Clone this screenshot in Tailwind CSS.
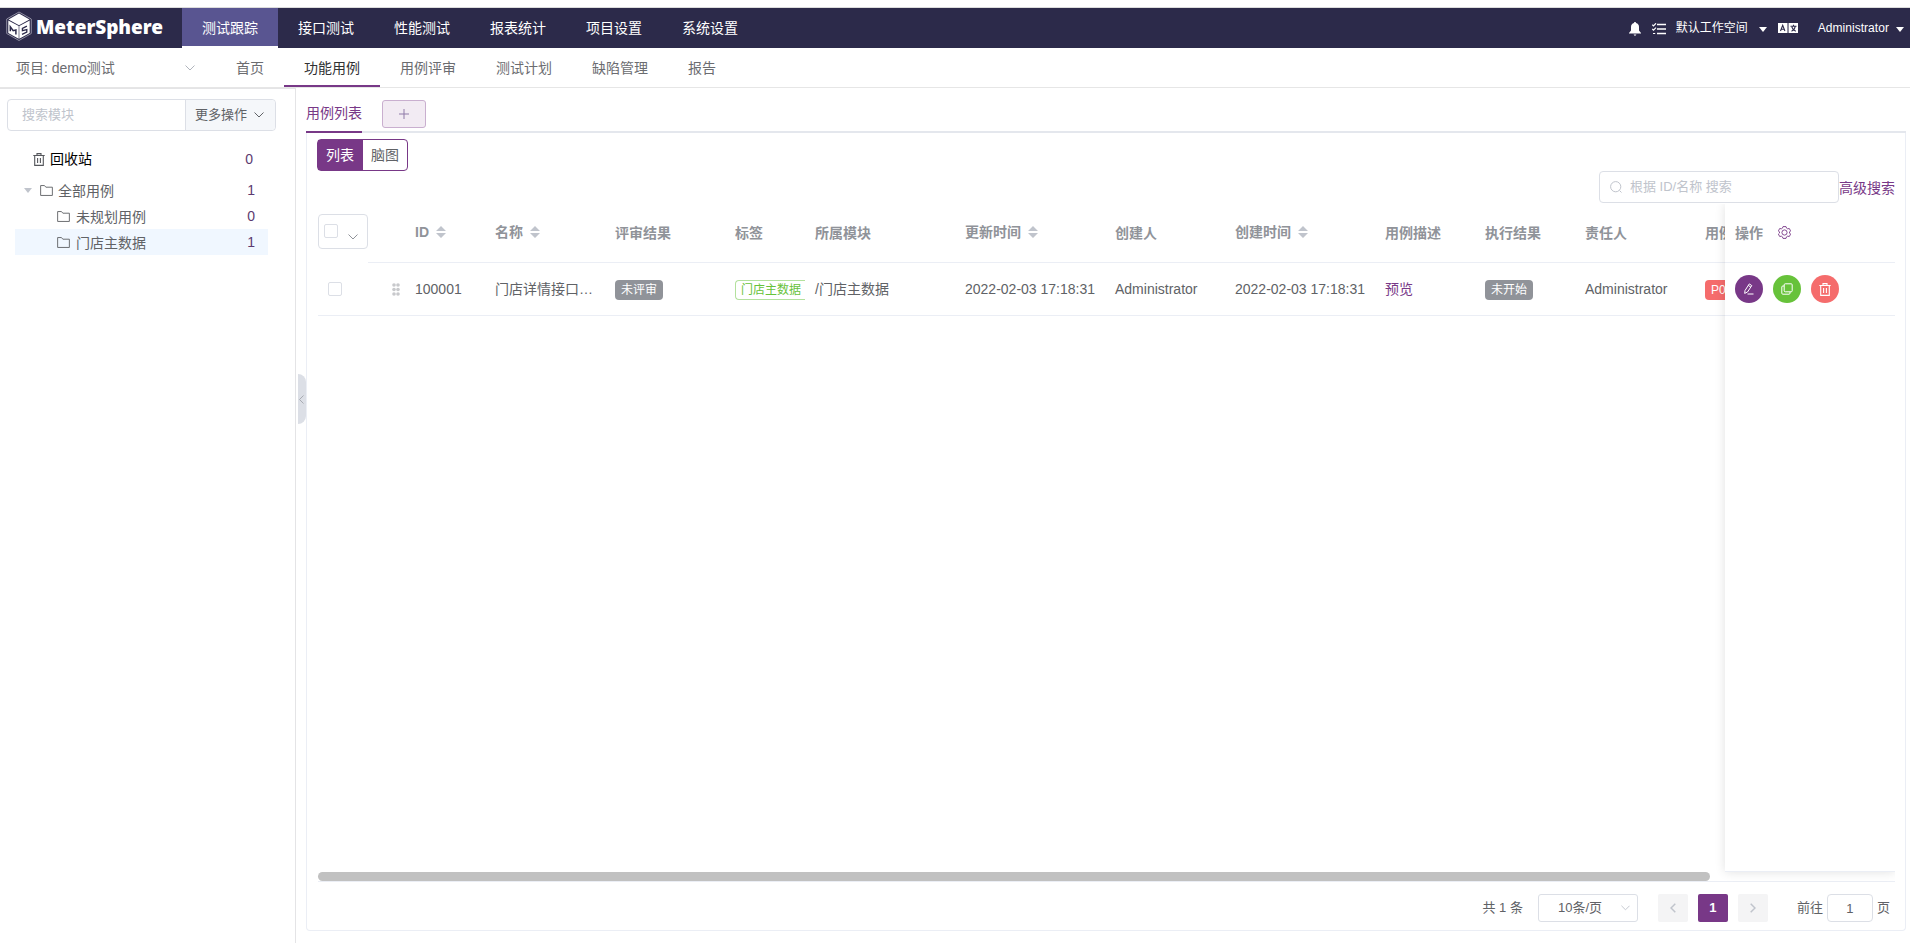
<!DOCTYPE html>
<html lang="zh-CN">
<head>
  <meta charset="UTF-8" />
  <meta name="viewport" content="width=device-width, initial-scale=1" />
  <title>MeterSphere</title>
  <script src="https://cdn.jsdelivr.net/npm/@tailwindcss/browser@4"></script>
  <style>
    body{font-family:"Liberation Sans","Noto Sans CJK SC",Arial,sans-serif}
  </style>
</head>
<body class="w-[1910px] h-[943px] overflow-hidden flex flex-col bg-white text-sm leading-5 text-[#606266]">

<!-- icons used more than once -->
<svg class="hidden">
  <symbol id="folder" viewBox="0 0 14 12"><path d="M.6 11.4V.6h4.2l1.5 1.8h7.1v9z" fill="none" stroke="currentColor" stroke-width="1"/></symbol>
  <symbol id="trash" viewBox="0 0 12 13"><path d="M.3 2.5h11.4M4 2.3V.6h4v1.7M1.7 2.7v9.7h8.6V2.7M4.6 5v5M7.4 5v5" fill="none" stroke="currentColor" stroke-width="1.1"/></symbol>
  <symbol id="down" viewBox="0 0 10 6"><path d="M.5.5 5 5 9.500.5" fill="none" stroke="currentColor" stroke-width="1"/></symbol>
  <symbol id="sort" viewBox="0 0 10 12"><path d="M5 0l5 5H0zM5 12l5-5H0z" fill="currentColor"/></symbol>
  <symbol id="caret" viewBox="0 0 8 5"><path d="M0 0h8L4 5z" fill="currentColor"/></symbol>
</svg>

<!-- TOP BAR -->
<header class="mt-[7px] h-[41px] shrink-0 border-t border-[#dcdcdc] bg-[#2c2a4a] text-white flex">
  <div class="w-[182px] flex items-start pl-1.5 pt-[3px]">
    <svg class="w-[26px] h-[31px] shrink-0" viewBox="0 0 26 31">
      <path d="M13 1 25.300 8v14.500L13 29.500.7 22.500V8z" fill="none" stroke="#9a99ab" stroke-width=".9"/>
      <path d="M13 2.600 23.500 8.500 13 14.300 2.500 8.500z" fill="#fff"/>
      <path d="M2.300 9.400 12.700 15.100v12.600L2.300 21.900z" fill="#fff"/>
      <path d="M23.700 9.400 13.300 15.100v12.600L23.700 21.900z" fill="#fff"/>
      <path d="M4.300 20.300v-4.600l2.900 4 2.700-.7v4.600" fill="none" stroke="#2c2a4a" stroke-width="1.500"/>
      <path d="M20.900 15.200l-4.500 2.100v2.400l4.400-1.200v2.500l-4.800 2.300" fill="none" stroke="#2c2a4a" stroke-width="1.300"/>
    </svg>
    <span class="ml-[4px] mt-[2px] font-['Noto_Sans'] font-black text-[19px] leading-[28px] tracking-[-0.05px]">MeterSphere</span>
  </div>
  <nav class="flex leading-[40px]">
    <a class="w-24 text-center bg-[#595591] h-[38px] border-b-2 border-white box-content">测试跟踪</a>
    <a class="w-24 text-center">接口测试</a>
    <a class="w-24 text-center">性能测试</a>
    <a class="w-24 text-center">报表统计</a>
    <a class="w-24 text-center">项目设置</a>
    <a class="w-24 text-center">系统设置</a>
  </nav>
  <div class="ml-auto flex items-center text-xs pr-[6px]">
    <svg class="w-3 h-[14px] mt-[2px]" viewBox="0 0 12 14"><path d="M6 0c.6 0 1 .4 1 1 2 .5 3 2 3 4v3.500L12 11v.6H0V11l2-2.500V5c0-2 1-3.500 3-4 0-.6.4-1 1-1zM4.500 12.400h3L6 14z" fill="#fff"/></svg>
    <svg class="ml-[11px] w-[14px] h-3 mt-[2px]" viewBox="0 0 14 12"><path d="M5 1.500h9M5 6h9M5 10.500h9" stroke="#fff" stroke-width="1.500"/><path d="M.3 1.600l1.200 1.200L4 .3M.3 6l1.200 1.200L4 4.700M1 10.500h2.200" fill="none" stroke="#fff" stroke-width="1.200"/></svg>
    <span class="ml-[10px]">默认工作空间</span>
    <svg class="ml-[11px] w-2 h-[5px] mt-[2px]"><use href="#caret"/></svg>
    <svg class="ml-[11px] w-5 h-[10px]" viewBox="0 0 20 10"><path d="M0 0h9.500v10H0zM11 0h9v10h-9z" fill="#fff"/><path d="M9.500 0H11v10H9.500z" fill="#8b8a9c"/><path d="M2.500 8 4.700 2.300 6.900 8M3.300 6.300h2.800M12.500 3.300h6M15.500 1.800v1.500M13.500 8.200c2-.8 3.300-2.400 3.700-4.700M13.800 4c.6 1.900 1.800 3.400 4 4.200" fill="none" stroke="#2c2a4a" stroke-width="1.100"/></svg>
    <span class="ml-5 tracking-[0.05px]">Administrator</span>
    <svg class="ml-[7px] w-2 h-[5px] mt-[2px]"><use href="#caret"/></svg>
  </div>
</header>

<!-- SUB MENU -->
<div class="h-10 shrink-0 border-b border-[#e6e6e6] flex leading-[41px] text-[#6b6c70]">
  <div class="w-[216px] pl-4 pr-[21px] flex items-center justify-between">
    <span class="pt-[1px]">项目: demo测试</span>
    <svg class="w-[10px] h-[6px] text-[#b0b4bc]"><use href="#down"/></svg>
  </div>
  <nav class="flex h-[39px]">
    <a class="px-5">首页</a>
    <a class="px-5 text-[#303133] border-b-2 border-[#783887]">功能用例</a>
    <a class="px-5">用例评审</a>
    <a class="px-5">测试计划</a>
    <a class="px-5">缺陷管理</a>
    <a class="px-5">报告</a>
  </nav>
</div>

<div class="flex-1 min-h-0 flex">
  <!-- MODULE TREE -->
  <aside class="w-[296px] shrink-0 border-r border-t border-[#e4e4e6]">
    <div class="mt-[10px] ml-[7px] w-[269px] h-8 border border-[#dcdfe6] rounded flex text-[13px] leading-[30px]">
      <div class="w-[177px] pl-[14px] text-[#c0c4cc]">搜索模块</div>
      <div class="flex-1 border-l border-[#dcdfe6] bg-[#f5f7fa] rounded-r pl-[9px] flex items-center">
        <span>更多操作</span>
        <svg class="ml-[7px] w-[10px] h-[6px]"><use href="#down"/></svg>
      </div>
    </div>
    <div class="mt-[15px] h-[26px] pl-[33px] pr-[42px] flex items-center text-black">
      <svg class="w-3 h-[13px] text-[#55575c]"><use href="#trash"/></svg>
      <span class="ml-[5px]">回收站</span>
      <span class="ml-auto text-[#5c3a70]">0</span>
    </div>
    <div class="mt-[5px] h-[26px] pl-6 pr-[40px] flex items-center">
      <svg class="w-2 h-[5px] text-[#c0c4cc]"><use href="#caret"/></svg>
      <svg class="ml-2 w-[13px] h-[11px]"><use href="#folder"/></svg>
      <span class="ml-[5px] pt-[1px]">全部用例</span>
      <span class="ml-auto text-[#5c3a70]">1</span>
    </div>
    <div class="mx-[15px] w-[253px] h-[26px] pl-[42px] pr-[13px] flex items-center">
      <svg class="w-[13px] h-[11px]"><use href="#folder"/></svg>
      <span class="ml-[6px] pt-[1px]">未规划用例</span>
      <span class="ml-auto text-[#5c3a70]">0</span>
    </div>
    <div class="mx-[15px] w-[253px] h-[26px] pl-[42px] pr-[13px] flex items-center bg-[#f0f7ff]">
      <svg class="w-[13px] h-[11px]"><use href="#folder"/></svg>
      <span class="ml-[6px] pt-[1px]">门店主数据</span>
      <span class="ml-auto text-[#5c3a70]">1</span>
    </div>
  </aside>

  <!-- collapse handle -->
  <div class="w-[10px] shrink-0 pt-[286px] pl-[2px]">
    <div class="w-2 h-[50px] bg-[#dcdfe6] rounded-r-lg flex items-center">
      <svg class="w-[7px] h-[9px]" viewBox="0 0 7 9"><path d="M5.500.5 1.500 4.500l4 4" fill="none" stroke="#a8abb2"/></svg>
    </div>
  </div>

  <main class="w-[1600px] pt-[12px] flex flex-col">
    <!-- tabs -->
    <div class="h-[33px] shrink-0 border-b-2 border-[#e4e7ed] flex">
      <div class="h-[33px] leading-[27px] text-[#783887] border-b-2 border-[#783887]">用例列表</div>
      <div class="ml-5 w-11 h-7 border border-[#c9afcf] bg-[#f2ebf3] rounded-[3px] flex items-center justify-center">
        <svg class="w-[10px] h-[10px]" viewBox="0 0 10 10"><path d="M0 5h10M5 0v10" stroke="#8f7aa8" stroke-width="1"/></svg>
      </div>
    </div>

    <div class="h-[798px] border border-t-0 border-[#ebeef5] rounded-b pl-[11px] pr-[10px] flex flex-col">
      <div class="mt-[6px] ml-[-1px] w-[91px] h-8 shrink-0 border border-[#783887] rounded flex leading-[30px]">
        <div class="w-[45px] pr-[1px] text-center bg-[#783887] text-white">列表</div>
        <div class="w-11 text-center">脑图</div>
      </div>
      <div class="h-[33px] shrink-0 flex justify-end">
        <div class="w-60 h-8 border border-[#dcdfe6] rounded flex items-center text-[13px] text-[#c0c4cc] pl-[10px]">
          <svg class="w-3 h-3" viewBox="0 0 12 12"><circle cx="5.700" cy="5.700" r="5.100" fill="none" stroke="currentColor"/><path d="M9.500 9.500l2 2" stroke="currentColor"/></svg>
          <span class="ml-[8px]">根据 ID/名称 搜索</span>
        </div>
        <span class="mt-[7px] text-[#783887]">高级搜索</span>
      </div>

      <!-- case table, last column is fixed -->
      <div class="h-[678px] shrink-0 w-[1577px] border-b border-[#ebeef5] flex flex-col">
        <div class="h-[668px] shrink-0 flex">
          <div class="w-[1407px] overflow-hidden">
            <div class="w-[1477px] h-[59px] grid grid-cols-[50px_17px_20px_80px_120px_120px_80px_150px_150px_120px_150px_100px_100px_120px_100px] text-[#909399] font-bold *:flex *:items-center *:border-b *:border-[#ebeef5] *:px-[10px] *:pb-[1px]">
              <div class="border-b-0! p-0! pb-[3px]!">
                <div class="mt-[-1px] w-[50px] h-[35px] border border-[#dcdfe6] rounded flex pl-[5px] pt-[9px]">
                  <span class="w-[14px] h-[14px] border border-[#dcdfe6] rounded-[2px]"></span>
                  <svg class="ml-[10px] mt-[10px] w-[10px] h-[6px] text-[#909399]"><use href="#down"/></svg>
                </div>
              </div>
              <div></div>
              <div></div>
              <div class="pb-[3px]!">ID<svg class="ml-[7px] w-[10px] h-3 text-[#c0c4cc]"><use href="#sort"/></svg></div>
              <div class="pb-[3px]!">名称<svg class="ml-[7px] w-[10px] h-3 text-[#c0c4cc]"><use href="#sort"/></svg></div>
              <div>评审结果</div>
              <div>标签</div>
              <div>所属模块</div>
              <div class="pb-[3px]!">更新时间<svg class="ml-[7px] w-[10px] h-3 text-[#c0c4cc]"><use href="#sort"/></svg></div>
              <div>创建人</div>
              <div class="pb-[3px]!">创建时间<svg class="ml-[7px] w-[10px] h-3 text-[#c0c4cc]"><use href="#sort"/></svg></div>
              <div>用例描述</div>
              <div>执行结果</div>
              <div>责任人</div>
              <div>用例等级</div>
            </div>
            <div class="w-[1477px] h-[53px] border-b border-[#ebeef5] grid grid-cols-[50px_17px_20px_80px_120px_120px_80px_150px_150px_120px_150px_100px_100px_120px_100px] whitespace-nowrap *:flex *:items-center *:px-[10px]">
              <div><span class="w-[14px] h-[14px] border border-[#dcdfe6] rounded-[2px]"></span></div>
              <div></div>
              <div class="px-[7px]!"><svg class="w-2 h-[13px] shrink-0" viewBox="0 0 8 13" fill="#c8c9cc"><circle cx="2" cy="2" r="1.800"/><circle cx="6" cy="2" r="1.800"/><circle cx="2" cy="6.500" r="1.800"/><circle cx="6" cy="6.500" r="1.800"/><circle cx="2" cy="11" r="1.800"/><circle cx="6" cy="11" r="1.800"/></svg></div>
              <div>100001</div>
              <div>门店详情接口…</div>
              <div><span class="mt-[1px] h-5 px-[6px] rounded bg-[#909399] text-white text-xs leading-5">未评审</span></div>
              <div class="pr-0!"><span class="mt-[1px] w-[70px] h-5 overflow-hidden pl-[5px] rounded-l border border-r-0 border-[#b3e19d] text-[#67c23a] text-xs leading-[18px]">门店主数据</span></div>
              <div>/门店主数据</div>
              <div>2022-02-03 17:18:31</div>
              <div>Administrator</div>
              <div>2022-02-03 17:18:31</div>
              <div class="text-[#783887]">预览</div>
              <div><span class="mt-[1px] h-5 px-[6px] rounded bg-[#909399] text-white text-xs leading-5">未开始</span></div>
              <div>Administrator</div>
              <div><span class="mt-[1px] h-5 px-[6px] rounded bg-[#f56c6c] text-white text-xs leading-5">P0</span></div>
            </div>
          </div>
          <div class="w-[170px] bg-white border-b border-[#ebeef5] shadow-[0_0_10px_rgba(0,0,0,0.12)] [clip-path:inset(0_0_-10px_-12px)]">
            <div class="h-[59px] border-b border-[#ebeef5] pl-[10px] pb-[1px] flex items-center text-[#909399] font-bold">
              操作
              <svg class="ml-[15px] w-[13px] h-[13px]" viewBox="0 0 13 13" fill="none" stroke="#783887" stroke-width=".9"><path d="M5 .6h3l.6 1.600 1 .6 1.700-.3 1.300 2.400L11.500 6v1l1.100 1.100-1.300 2.400-1.700-.3-1 .6-.6 1.600H5l-.6-1.600-1-.6-1.700.3L.4 8.100 1.500 7V6L.4 4.900l1.300-2.400 1.700.3 1-.6z"/><circle cx="6.500" cy="6.500" r="2.600"/></svg>
            </div>
            <div class="h-[53px] border-b border-[#ebeef5] pl-[10px] flex items-center gap-[10px] text-white *:w-7 *:h-7 *:rounded-full *:flex *:items-center *:justify-center">
              <div class="bg-[#783887]"><svg class="w-3 h-3" viewBox="0 0 12 12" fill="none" stroke="currentColor"><path d="M2 7.500 6.300.9l2.500 1.700L4.500 9 1.700 10.400zM5.300 2.400l2.500 1.700M4.500 11h6"/></svg></div>
              <div class="bg-[#67c23a]"><svg class="w-3 h-3" viewBox="0 0 12 12" fill="none" stroke="currentColor"><rect x="3.200" y=".8" width="8" height="8" rx="1"/><path d="M3.200 3H1.800a1 1 0 0 0-1 1v6.200a1 1 0 0 0 1 1H8a1 1 0 0 0 1-1V8.800"/></svg></div>
              <div class="bg-[#f56c6c]"><svg class="w-3 h-[13px]"><use href="#trash"/></svg></div>
            </div>
          </div>
        </div>
        <div class="w-[1392px] h-[9px] bg-[#c1c1c1] rounded-full"></div>
      </div>

      <!-- pagination -->
      <div class="mt-3 mr-[5px] h-7 flex justify-end items-center text-[13px]">
        <span>共 1 条</span>
        <div class="ml-[15px] w-[100px] h-7 border border-[#dcdfe6] rounded-[3px] flex items-center pl-[19px] pr-[7px]">
          <span>10条/页</span>
          <svg class="ml-auto w-[9px] h-[6px] text-[#c0c4cc]"><use href="#down"/></svg>
        </div>
        <div class="ml-5 w-[30px] h-7 bg-[#f4f4f5] rounded-[2px] flex items-center justify-center"><svg class="w-[6px] h-[10px]" viewBox="0 0 6 10"><path d="M5.300.7 1 5l4.300 4.300" fill="none" stroke="#c0c4cc" stroke-width="1.500"/></svg></div>
        <div class="ml-[10px] w-[30px] h-7 bg-[#783887] rounded-[2px] text-white font-bold text-center leading-7">1</div>
        <div class="ml-[10px] w-[30px] h-7 bg-[#f4f4f5] rounded-[2px] flex items-center justify-center"><svg class="w-[6px] h-[10px]" viewBox="0 0 6 10"><path d="M.7.700 5 5 .7 9.300" fill="none" stroke="#c0c4cc" stroke-width="1.500"/></svg></div>
        <span class="ml-[29px]">前往</span>
        <div class="ml-1 w-[46px] h-7 border border-[#dcdfe6] rounded text-center leading-[27px]">1</div>
        <span class="ml-1">页</span>
      </div>
    </div>
  </main>
</div>
</body>
</html>
